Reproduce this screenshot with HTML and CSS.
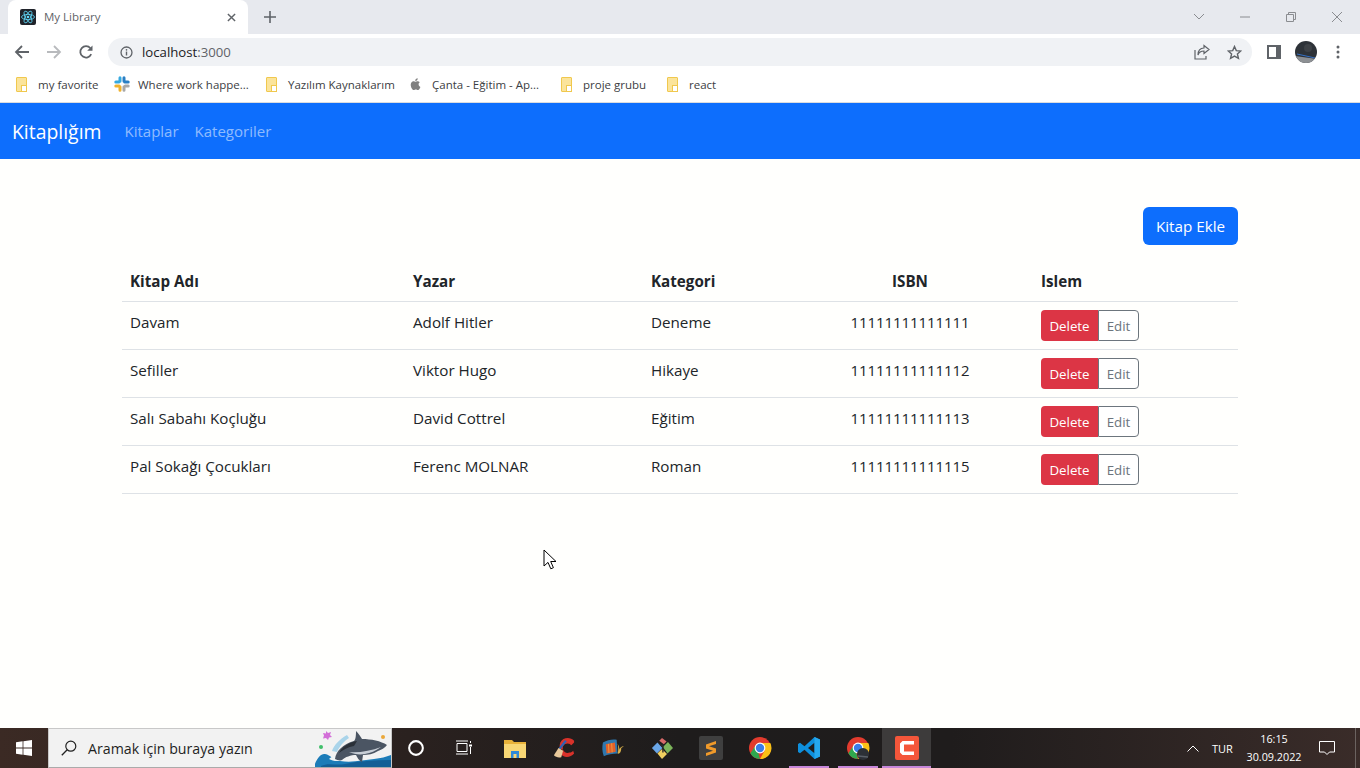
FILE: index.html
```html
<!DOCTYPE html>
<html lang="tr">
<head>
<meta charset="utf-8">
<title>My Library</title>
<link rel="stylesheet" href="styles.css">
</head>
<body>
<header class="chrome">
  <div class="tabstrip">
    <div class="tab">
      <svg class="favicon" viewBox="0 0 16 16"><rect width="16" height="16" rx="2" fill="#20232a"/><g fill="none" stroke="#61dafb" stroke-width=".8"><ellipse cx="8" cy="8" rx="6.5" ry="2.6"/><ellipse cx="8" cy="8" rx="6.5" ry="2.6" transform="rotate(60 8 8)"/><ellipse cx="8" cy="8" rx="6.5" ry="2.6" transform="rotate(120 8 8)"/></g><circle cx="8" cy="8" r="1.3" fill="#61dafb"/></svg>
      <span class="tab-title">My Library</span>
      <svg class="tab-close" viewBox="0 0 10 10"><path d="M1 1l8 8M9 1l-8 8" stroke="#5f6368" stroke-width="1.6"/></svg>
    </div>
    <svg class="new-tab" viewBox="0 0 12 12"><path d="M6 0v12M0 6h12" stroke="#5f6368" stroke-width="1.6"/></svg>
    <div class="window-controls">
      <svg class="wc wc-chevron" viewBox="0 0 12 8"><path d="M1 1l5 5 5-5" fill="none" stroke="#8a8c90" stroke-width="1"/></svg>
      <svg class="wc wc-min" viewBox="0 0 12 12"><path d="M1 6h10" stroke="#8a8c90" stroke-width="1"/></svg>
      <svg class="wc wc-max" viewBox="0 0 12 12"><path d="M1.500 3.500h7v7h-7zM3.500 3.500v-2h7v7h-2" fill="none" stroke="#8a8c90" stroke-width="1"/></svg>
      <svg class="wc wc-close" viewBox="0 0 12 12"><path d="M1 1l10 10M11 1L1 11" stroke="#8a8c90" stroke-width="1"/></svg>
    </div>
  </div>
  <div class="toolbar">
    <svg class="nav-icon" viewBox="0 0 16 16"><path d="M15 8H2M8 2L2 8l6 6" fill="none" stroke="#5f6368" stroke-width="1.800"/></svg>
    <svg class="nav-icon" viewBox="0 0 16 16"><path d="M1 8h13M8 2l6 6-6 6" fill="none" stroke="#b8babd" stroke-width="1.800"/></svg>
    <svg class="nav-icon" viewBox="0 0 16 16"><path d="M13.200 10.200A5.700 5.700 0 1 1 12.400 4.200" fill="none" stroke="#5f6368" stroke-width="1.800"/><path d="M14.500 1.500v5.300H9.200z" fill="#5f6368"/></svg>
    <div class="omnibox">
      <svg class="info" viewBox="0 0 14 14"><circle cx="7" cy="7" r="5.900" fill="none" stroke="#5f6368" stroke-width="1.400"/><path d="M7 6v4.200" stroke="#5f6368" stroke-width="1.500"/><circle cx="7" cy="4.100" r=".9" fill="#5f6368"/></svg>
      <span class="url">localhost<span class="url-port">:3000</span></span>
      <svg class="omni-share" viewBox="0 0 16 16"><path d="M1 6v9h11v-3" fill="none" stroke="#5f6368" stroke-width="1.200"/><path d="M10 1.500L15 5.500 10 9.500V7C7 7 5 8 4 11 4 7 6 4 10 4z" fill="none" stroke="#5f6368" stroke-width="1.200"/></svg>
      <svg class="omni-star" viewBox="0 0 16 16"><path d="M8 1.600l1.900 4.400 4.800.4-3.600 3.200 1.100 4.700L8 11.800l-4.200 2.500 1.100-4.700L1.300 6.400l4.800-.4z" fill="none" stroke="#5f6368" stroke-width="1.500"/></svg>
    </div>
    <svg class="side-panel" viewBox="0 0 14 14"><path d="M0 0h14v14H0z" fill="#5f6368"/><path d="M2 2h7v10H2z" fill="#fff"/></svg>
    <svg class="avatar" viewBox="0 0 22 22"><defs><clipPath id="av"><circle cx="11" cy="11" r="11"/></clipPath></defs><g clip-path="url(#av)"><rect width="22" height="22" fill="#2d3238"/><path d="M0 15l22 3v4H0z" fill="#8d9094"/><path d="M2 13l18 4" stroke="#3570c4" stroke-width="1"/><circle cx="13" cy="7" r="4" fill="#3d4146"/></g></svg>
    <svg class="kebab" viewBox="0 0 4 14"><circle cx="2" cy="2" r="1.500" fill="#5f6368"/><circle cx="2" cy="7" r="1.500" fill="#5f6368"/><circle cx="2" cy="12" r="1.500" fill="#5f6368"/></svg>
  </div>
  <nav class="bookmarks">
    <a class="bm bm-1"><span class="folder"></span>my favorite</a>
    <a class="bm bm-2"><svg class="bm-logo" viewBox="0 0 16 16"><g stroke-width="3" stroke-linecap="round" fill="none"><path d="M6 1.800v3.400M1.800 6h3" stroke="#36a9e0"/><path d="M14.200 6h-3.400M10 1.800v3.400" stroke="#2a7fc4"/><path d="M10 14.200v-3.400M14.200 10h-3" stroke="#a8a8a8"/><path d="M1.800 10h3.400M6 14.200v-3.400" stroke="#f0b22e"/></g></svg>Where work happe...</a>
    <a class="bm bm-3"><span class="folder"></span>Yazılım Kaynaklarım</a>
    <a class="bm bm-4"><svg class="bm-apple" viewBox="0 0 14 16"><path d="M10 8.400c0-1.600 1.300-2.300 1.400-2.400-.8-1.100-2-1.300-2.400-1.300-1-.1-2 .6-2.500.6s-1.300-.6-2.200-.6C3.100 4.700 2 5.400 1.400 6.500.2 8.600 1.100 11.700 2.300 13.400c.6.800 1.300 1.800 2.200 1.700.9 0 1.200-.6 2.300-.6s1.400.6 2.300.6 1.500-.8 2.100-1.700c.7-1 .9-1.900.9-2-.1 0-2.100-.8-2.100-3zM8.300 3.500C8.800 2.900 9.100 2.100 9 1.200c-.7 0-1.600.5-2.100 1.100-.5.500-.9 1.300-.8 2.100.8.100 1.600-.4 2.200-.9z" fill="#808080"/></svg>Çanta - Eğitim - Ap...</a>
    <a class="bm bm-5"><span class="folder"></span>proje grubu</a>
    <a class="bm bm-6"><span class="folder"></span>react</a>
  </nav>
</header>

<nav class="navbar">
  <a class="brand">Kitaplığım</a>
  <a class="nav-link">Kitaplar</a>
  <a class="nav-link">Kategoriler</a>
</nav>

<main class="page">
  <div class="container">
    <div class="actions"><button class="btn-add">Kitap Ekle</button></div>
    <table class="books">
      <colgroup><col class="c1"><col class="c2"><col class="c3"><col class="c4"><col class="c5"></colgroup>
      <thead><tr><th>Kitap Adı</th><th>Yazar</th><th>Kategori</th><th class="center">ISBN</th><th>Islem</th></tr></thead>
      <tbody>
        <tr><td>Davam</td><td>Adolf Hitler</td><td>Deneme</td><td class="center">11111111111111</td><td><div class="group"><button class="del">Delete</button><button class="edit">Edit</button></div></td></tr>
        <tr><td>Sefiller</td><td>Viktor Hugo</td><td>Hikaye</td><td class="center">11111111111112</td><td><div class="group"><button class="del">Delete</button><button class="edit">Edit</button></div></td></tr>
        <tr><td>Salı Sabahı Koçluğu</td><td>David Cottrel</td><td>Eğitim</td><td class="center">11111111111113</td><td><div class="group"><button class="del">Delete</button><button class="edit">Edit</button></div></td></tr>
        <tr><td>Pal Sokağı Çocukları</td><td>Ferenc MOLNAR</td><td>Roman</td><td class="center">11111111111115</td><td><div class="group"><button class="del">Delete</button><button class="edit">Edit</button></div></td></tr>
      </tbody>
    </table>
  </div>
  <svg class="cursor" viewBox="0 0 14 22"><path d="M1 1v16l4-3.600 2.800 6.400 2.600-1.100L7.700 12.500H13z" fill="#fff" stroke="#000" stroke-width="1"/></svg>
</main>

<footer class="taskbar">
  <div class="start"><svg viewBox="0 0 16 16"><path d="M0 2.200l6.600-.9v6.300H0zM7.400 1.200L16 0v7.600H7.400zM0 8.400h6.600v6.300L0 13.800zM7.400 8.400H16V16l-8.600-1.200z" fill="#fff"/></svg></div>
  <div class="search">
    <svg class="search-icon" viewBox="0 0 16 16"><circle cx="9.800" cy="6.200" r="5" fill="none" stroke="#222" stroke-width="1.200"/><path d="M6.200 9.800L.8 15.200" stroke="#222" stroke-width="1.300"/></svg>
    <span class="search-text">Aramak için buraya yazın</span>
    <svg class="whale" viewBox="0 0 76 38">
      <path d="M17 22c2-6 8-12 15-16l2 3c-5 3-10 9-12 14z" fill="#a9d4ea"/>
      <path d="M-1 38C1 30 6 24 10 25c6 1 8 6 15 7 12 2 24-1 34-2 7-1 12-2 17-4v12z" fill="#1c7cb8"/>
      <path d="M6 37c8-4 14 0 24-2 14-3 30-4 46-4v7H6z" fill="#135f96"/>
      <path d="M14 30c3 2 10 3 13 1-2-3-8-6-13-1z" fill="#eef4f6"/>
      <path d="M20 30c1-8 8-15 19-18 2-1 2-8 2-10 2 2 5 6 6 8 9 0 19 2 25 6-2 3-6 5-9 6-5 3-10 4-15 4l-1 7c-3-1-5-5-6-7-5 0-11 2-14 5-2 1-5 0-7-1z" fill="#4b5563"/>
      <path d="M24 24c3-6 10-11 18-12l-3 5c-6 1-11 4-15 7z" fill="#2a3038"/>
      <path d="M34 23c9 1 22-1 32-5-6 4-10 6-16 7-6 1-11 0-16-2z" fill="#c8ced6"/>
      <path d="M11 2l2 2 3-1-1 3 2 2-3 .5-1 2.500-2-2-3 .5 1-3-1-2.500 3 .5z" fill="#d36ed8"/>
      <circle cx="6" cy="18" r="2" fill="#3fbf6a"/>
      <circle cx="68" cy="8" r="2" fill="#eba83a"/>
    </svg>
  </div>
  <div class="tb-item"><svg class="cortana" viewBox="0 0 14 14"><circle cx="7" cy="7" r="6" fill="none" stroke="#fff" stroke-width="1.800"/></svg></div>
  <div class="tb-item"><svg class="taskview" viewBox="0 0 16 16"><path d="M1 3.500h10v8H1zM0 1h12M0 14h12M14.500 1v2M14.500 7v7" fill="none" stroke="#fff" stroke-width="1"/><rect x="13" y="4.500" width="3" height="2" fill="#fff"/></svg></div>
  <div class="tb-item"><svg class="app" viewBox="0 0 22 20"><path d="M0 2h8l2 2h12v3H0z" fill="#e8b23a"/><path d="M0 6h22v14H0z" fill="#f8d775"/><path d="M7 20v-7h8v7h-2.500v-4h-3v4z" fill="#2e8ad8"/></svg></div>
  <div class="tb-item"><svg class="app" viewBox="0 0 24 22"><path d="M23 3C19-1 11-1 8 5c-1 3-1 5 0 7l3 1c-1-4 1-7 5-7 2 0 3 1 4 2l3-3z" fill="#d9322a"/><path d="M11 13c1 3 4 4 7 3 2 0 3-1 4-2l1 3c-4 5-12 5-15 0z" fill="#d9322a"/><path d="M14 3l-7 9" stroke="#2d62b8" stroke-width="2.500"/><path d="M1 19l5-8 5 3-2 7c-3 1-6 0-8-2z" fill="#e8c89a"/></svg></div>
  <div class="tb-item"><svg class="app" viewBox="0 0 24 22"><path d="M1 5c5-3 11-4 15-3l1 15c-5 0-11 1-15 3-2-5-2-10-1-15z" fill="#2f77ad"/><path d="M4 7l10-2 1 10-10 2z" fill="#e3602a"/><path d="M7 6.500l.6 10M10.500 5.800l.6 10" stroke="#f09a3e" stroke-width="1"/><path d="M17 6c1 4 1 8 0 11 3 1 4-3 4-6l3-2c-3 0-5 2-5 4 0-3-1-5-2-7z" fill="#d9b04a"/></svg></div>
  <div class="tb-item"><svg class="app" viewBox="0 0 24 24"><path d="M1 12l6-6 5.500 6-6 6z" fill="#6aa6e8"/><path d="M13 11l5.500-5.500L24 12l-6 6z" fill="#7cb45a"/><path d="M7 18l5-5 5.500 5.500-5.500 5.500z" fill="#f0cf60"/><path d="M9 4l3-3 5 4-3 3z" fill="#d86a6a"/><path d="M13 8v9M10 8l3 3" stroke="#2a2a2a" stroke-width="1.500" fill="none"/></svg></div>
  <div class="tb-item"><svg class="app app-lg" viewBox="0 0 24 24"><rect width="24" height="24" rx="2" fill="#3f3f3f"/><path d="M17 5L7 8.500v4l7 2.300-7 2.200v3l10-3.500v-4L10 10.300 17 8z" fill="#f09a2a"/></svg></div>
  <div class="tb-item"><svg class="app app-lg" viewBox="0 0 24 24"><circle cx="12" cy="12" r="11" fill="#e33b2e"/><path d="M12 23a11 11 0 0 1-9.600-5.700L8 9z" fill="#2fa84f"/><path d="M12 7h10.300A11 11 0 0 1 12 23l5-9z" fill="#fbc116"/><circle cx="12" cy="12" r="5.400" fill="#fff"/><circle cx="12" cy="12" r="4.200" fill="#3b7de8"/></svg></div>
  <div class="tb-item tb-open"><svg class="app app-lg" viewBox="0 0 24 24"><path d="M17.500 1L23 3.500v17L17.500 23 7.500 13.800 3 17.200 1 16V8l2-1.200 4.500 3.400z" fill="#0e8fdc"/><path d="M17.500 6.800L11 12l6.500 5.200z" fill="#1f1d1d"/><path d="M17.500 1L23 3.500v17L17.500 23z" fill="#25a8ee"/></svg></div>
  <div class="tb-item tb-open"><svg class="app app-lg" viewBox="0 0 24 24"><circle cx="12" cy="12" r="11" fill="#e33b2e"/><path d="M12 23a11 11 0 0 1-9.600-5.700L8 9z" fill="#2fa84f"/><path d="M12 7h10.300A11 11 0 0 1 12 23l5-9z" fill="#fbc116"/><circle cx="12" cy="12" r="5.400" fill="#fff"/><circle cx="12" cy="12" r="4.200" fill="#3b7de8"/><circle cx="17" cy="18" r="6" fill="#2c3036"/><path d="M12 20l10 1" stroke="#5a6068" stroke-width="1.500"/></svg></div>
  <div class="tb-item tb-active"><svg class="app app-lg" viewBox="0 0 24 24"><rect width="24" height="24" rx="2" fill="#f4563a"/><path d="M19 5H7.500L5 7.500v9L7.500 19H19v-3.500H9V8.500h10z" fill="#fff"/></svg></div>
  <div class="tray">
    <svg class="tray-up" viewBox="0 0 12 7"><path d="M.5 6.500L6 1l5.500 5.500" fill="none" stroke="#fff" stroke-width="1"/></svg>
    <span class="tray-lang">TUR</span>
    <div class="clock"><span>16:15</span><span>30.09.2022</span></div>
    <svg class="notify" viewBox="0 0 16 16"><path d="M.5 1.500h15v10.500h-5L8 14.500 5.500 12h-5z" fill="none" stroke="#fff" stroke-width="1"/></svg>
    <span class="show-desktop"></span>
  </div>
</footer>
</body>
</html>
```
FILE: styles.css
```css
* { box-sizing: border-box; }
html, body { margin: 0; height: 100%; }
body {
  width: 1360px;
  height: 768px;
  overflow: hidden;
  display: flex;
  flex-direction: column;
  background: #fffffd;
  font-family: "Open Sans", "Noto Sans", sans-serif;
  color: #212529;
}
svg { display: block; flex: none; }

/* browser */
.chrome { flex: none; background: #fff; height: 103px; border-bottom: 1px solid #dadce0; }
.tabstrip { height: 34px; background: #e7e9ee; display: flex; align-items: center; padding-left: 8px; }
.tab {
  width: 240px; height: 34px; background: #fff;
  border-radius: 8px 8px 0 0;
  display: flex; align-items: center; padding: 0 12px;
}
.favicon { width: 16px; height: 16px; }
.tab-title { margin: 0 0 2px 8px; flex: 1; font-size: 11.500px; color: #5f6368; }
.tab-close { width: 9px; height: 9px; }
.new-tab { width: 12px; height: 12px; margin-left: 16px; }
.window-controls { margin-left: auto; display: flex; align-items: center; }
.wc { width: 12px; height: 12px; margin-right: 34px; }
.wc-chevron { height: 8px; }
.wc-close { margin-right: 17px; }

.toolbar { height: 36px; display: flex; align-items: center; padding-left: 14px; }
.nav-icon { width: 16px; height: 16px; margin-right: 16px; }
.omnibox {
  width: 1144px; height: 28px; margin-left: -2px; background: #f0f2f5;
  border-radius: 14px; display: flex; align-items: center; padding: 0 10px 0 12px;
}
.info { width: 13px; height: 13px; }
.url { margin-left: 9px; font-size: 13.200px; color: #202124; flex: 1; }
.url-port { color: #5f6368; }
.omni-share { width: 16px; height: 16px; margin-right: 17px; }
.omni-star { width: 15px; height: 15px; }
.side-panel { width: 14px; height: 14px; margin-left: 15px; }
.avatar { width: 22px; height: 22px; margin-left: 14px; }
.kebab { width: 4px; height: 14px; margin-left: 19px; }

.bookmarks { height: 32px; display: flex; align-items: center; padding: 0 0 4px 16px; font-size: 11.500px; color: #3c4043; }
.bm { display: flex; align-items: center; white-space: nowrap; }
.bm-1 { width: 98px; }
.bm-2 { width: 152px; }
.bm-3 { width: 144px; }
.bm-4 { width: 151px; }
.bm-5 { width: 106px; }
.folder {
  position: relative;
  width: 11px; height: 15px; margin-right: 11px; flex: none;
  background: #fbe49b; border: 1px solid #f0c84e; border-radius: 1px;
}
.folder::after {
  content: ""; position: absolute; right: -1px; bottom: -1px;
  width: 4px; height: 5px; background: #fff; border: 1px solid #f0c84e;
}
.bm-logo { width: 16px; height: 16px; margin-right: 8px; }
.bm-apple { width: 12px; height: 14px; margin-right: 10px; }

/* app navbar */
.navbar {
  flex: none; height: 56px; background: #0d6efd;
  display: flex; align-items: center; padding-left: 12px;
}
.brand { color: #fff; font-size: 19.400px; margin-right: 23px; }
.nav-link { color: rgba(255,255,255,.55); font-size: 15px; margin-right: 16px; }

/* page */
.page { flex: 1; position: relative; }
.container { width: 1116px; margin: 0 auto; padding-top: 48px; }
.actions { display: flex; justify-content: flex-end; height: 38px; margin-bottom: 19px; }
.btn-add {
  width: 95px; height: 38px; border: 0; border-radius: 6px;
  background: #0d6efd; color: #fff; font: inherit; font-size: 15.200px;
}
.books { width: 100%; border-collapse: collapse; table-layout: fixed; font-size: 15.200px; }
.c1 { width: 283px; } .c2 { width: 238px; } .c3 { width: 144px; } .c4 { width: 246px; } .c5 { width: 205px; }
.books th { height: 37px; padding: 0 8px 2px; text-align: left; font-weight: 700; font-size: 15.200px; border-bottom: 1px solid #dee2e6; }
.books td { height: 48px; padding: 0 8px 6px; border-bottom: 1px solid #dee2e6; }
.books tbody td:last-child { padding-bottom: 0; }
.books .center { text-align: center; padding-left: 0; padding-right: 0; }
.books td.center { font-size: 14.900px; }
.group { display: flex; }
.group button { height: 31px; font: inherit; font-size: 13.300px; padding: 1px 0 0; }
.del { width: 57px; border: 0; background: #dc3545; color: #fff; border-radius: 4px 0 0 4px; }
.edit { width: 41px; border: 1px solid #6c757d; background: #fff; color: #6c757d; border-radius: 0 4px 4px 0; }
.cursor { position: absolute; left: 543px; top: 390px; width: 14px; height: 22px; }

/* taskbar */
.taskbar {
  flex: none; height: 40px;
  background: linear-gradient(90deg, #3b2a24 0, #2a211f 30%, #1e1c1c 50%, #1f1c1c 70%, #3a2c29 100%);
  display: flex; align-items: stretch; color: #fff;
}
.start { width: 48px; display: flex; align-items: center; justify-content: center; }
.start svg { width: 16px; height: 16px; }
.search {
  width: 344px; background: #f2f2f2; border: 1px solid #c8c8c8; border-bottom-color: #aaa;
  display: flex; align-items: center; padding-left: 12px; position: relative; overflow: hidden;
}
.search-icon { width: 16px; height: 16px; }
.search-text { margin-left: 11px; color: #1f1f1f; font-size: 14.200px; }
.whale { position: absolute; right: 0; bottom: 0; width: 76px; height: 38px; }
.tb-item { width: 49px; display: flex; align-items: center; justify-content: center; }
.app { width: 22px; height: 22px; }
.app-lg { width: 24px; height: 24px; }
.cortana { width: 16px; height: 16px; margin-right: 2px; }
.taskview { width: 16px; height: 16px; margin-right: 4px; }
.tb-open { background: linear-gradient(#c686d9, #c686d9) center bottom / 40px 2px no-repeat; }
.tb-active { background: linear-gradient(#c686d9, #c686d9) center bottom / 100% 2px no-repeat, #3d3b3b; }
.tray { margin-left: auto; padding-right: 4px; display: flex; align-items: center; font-size: 11px; }
.tray-up { width: 12px; height: 7px; margin-right: 13px; }
.tray-lang { width: 27px; }
.clock { width: 70px; display: flex; flex-direction: column; align-items: center; line-height: 18px; font-size: 10.800px; }
.notify { width: 16px; height: 16px; margin-left: 10px; }
.show-desktop { width: 21px; height: 100%; border-right: 1px solid #6b6360; }
```
